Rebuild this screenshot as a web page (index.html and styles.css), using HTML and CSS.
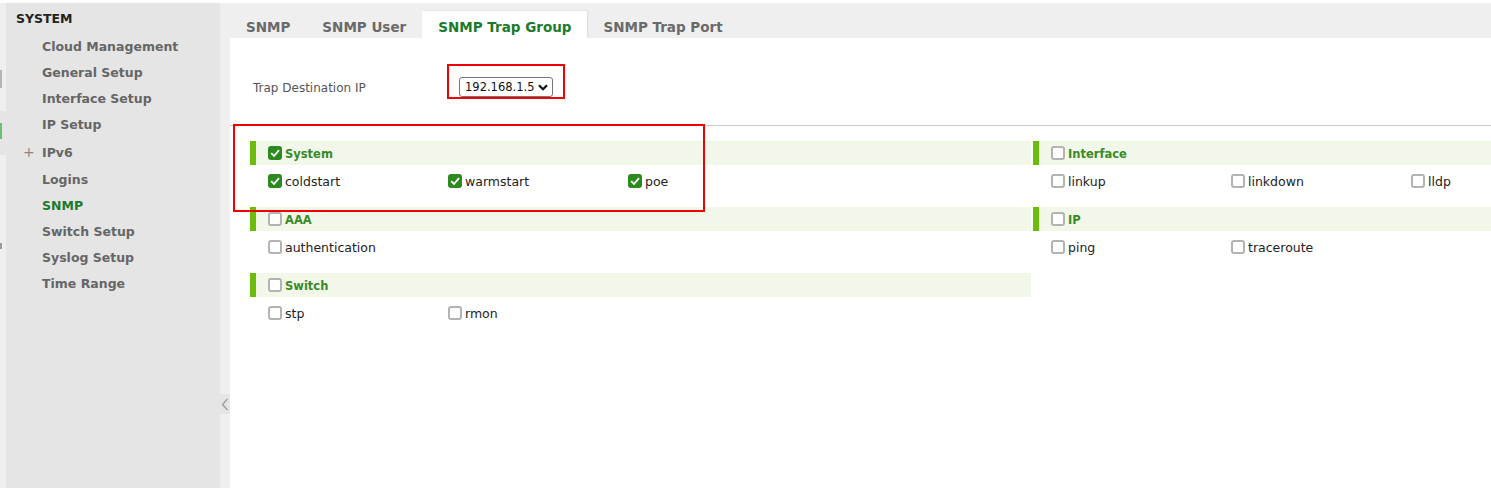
FILE: index.html
```html
<!DOCTYPE html>
<html>
    <head>
        <link rel="stylesheet" href="styles.css">
    </head>
    <body>
        <div class="layout">
            <div class="rail">
                <span class="rail-mark"></span>
                <div class="rail-active"><span class="rail-mark green"></span></div>
                <span class="rail-mark small"></span>
            </div>

            <nav class="sidebar">
                <div class="side-title">SYSTEM</div>
                <ul class="side-menu">
                    <li>Cloud Management</li>
                    <li>General Setup</li>
                    <li>Interface Setup</li>
                    <li>IP Setup</li>
                    <li class="has-sub"><span class="plus">+</span>IPv6</li>
                    <li>Logins</li>
                    <li class="active">SNMP</li>
                    <li>Switch Setup</li>
                    <li>Syslog Setup</li>
                    <li>Time Range</li>
                </ul>
            </nav>

            <div class="gutter">
                <div class="collapse">
                    <svg width="8" height="13" viewBox="0 0 8 13"><polyline points="6.5,1 1.5,6.5 6.5,12" fill="none" stroke="#9a9a9a" stroke-width="1.3"/></svg>
                </div>
            </div>

            <main class="main">
                <div class="tabs">
                    <div class="tab">SNMP</div>
                    <div class="tab">SNMP User</div>
                    <div class="tab active">SNMP Trap Group</div>
                    <div class="tab">SNMP Trap Port</div>
                </div>

                <div class="panel">
                    <div class="field-row">
                        <label class="field-label">Trap Destination IP</label>
                        <div class="select">
                            <span>192.168.1.5</span>
                            <svg width="10" height="7" viewBox="0 0 10 7"><polyline points="1,1.2 5,5.2 9,1.2" fill="none" stroke="#111" stroke-width="2.2"/></svg>
                        </div>
                    </div>

                    <hr class="divider">

                    <div class="groups">
                        <div class="col">
                            <div class="grp">
                                <div class="grp-head"><span class="cb on"><svg viewBox="0 0 14 14"><polyline points="3.2,7.2 6,10 11,4.2" fill="none" stroke="#fff" stroke-width="1.8"/></svg></span>System</div>
                                <div class="grp-items">
                                    <div class="item"><span class="cb on"><svg viewBox="0 0 14 14"><polyline points="3.2,7.2 6,10 11,4.2" fill="none" stroke="#fff" stroke-width="1.8"/></svg></span>coldstart</div>
                                    <div class="item"><span class="cb on"><svg viewBox="0 0 14 14"><polyline points="3.2,7.2 6,10 11,4.2" fill="none" stroke="#fff" stroke-width="1.8"/></svg></span>warmstart</div>
                                    <div class="item"><span class="cb on"><svg viewBox="0 0 14 14"><polyline points="3.2,7.2 6,10 11,4.2" fill="none" stroke="#fff" stroke-width="1.8"/></svg></span>poe</div>
                                </div>
                            </div>
                            <div class="grp">
                                <div class="grp-head"><span class="cb"></span>AAA</div>
                                <div class="grp-items">
                                    <div class="item"><span class="cb"></span>authentication</div>
                                </div>
                            </div>
                            <div class="grp">
                                <div class="grp-head"><span class="cb"></span>Switch</div>
                                <div class="grp-items">
                                    <div class="item"><span class="cb"></span>stp</div>
                                    <div class="item"><span class="cb"></span>rmon</div>
                                </div>
                            </div>
                        </div>

                        <div class="col">
                            <div class="grp">
                                <div class="grp-head"><span class="cb"></span>Interface</div>
                                <div class="grp-items">
                                    <div class="item"><span class="cb"></span>linkup</div>
                                    <div class="item"><span class="cb"></span>linkdown</div>
                                    <div class="item"><span class="cb"></span>lldp</div>
                                </div>
                            </div>
                            <div class="grp">
                                <div class="grp-head"><span class="cb"></span>IP</div>
                                <div class="grp-items">
                                    <div class="item"><span class="cb"></span>ping</div>
                                    <div class="item"><span class="cb"></span>traceroute</div>
                                </div>
                            </div>
                        </div>
                    </div>

                    <div class="mark mark-ip"></div>
                    <div class="mark mark-system"></div>
                </div>
            </main>
        </div>
    </body>
</html>
```

FILE: styles.css
```css
*{
    box-sizing: border-box;
}

body{
    margin: 0;
    padding-top: 3px;
    background-color: #fff;
    font-family: "DejaVu Sans", sans-serif;
    overflow: hidden;
}

.layout{
    display: flex;
    height: 485px;
}

/* left icon rail, mostly cut off */
.rail{
    flex: 0 0 6px;
    background-color: #efefef;
    display: flex;
    flex-direction: column;
}

.rail-mark{
    display: block;
    width: 2px;
    height: 18px;
    margin-top: 67px;
    background-color: #b5b5b5;
}

.rail-active{
    margin-top: 23px;
    height: 44px;
    background-color: #e5e5e5;
}

.rail-mark.green{
    height: 16px;
    margin-top: 12px;
    background-color: #6cc070;
}

.rail-mark.small{
    height: 6px;
    margin-top: 88px;
    background-color: #9a9a9a;
}

.sidebar{
    flex: 0 0 214px;
    background-color: #e5e5e5;
    white-space: nowrap;
}

.side-title{
    padding: 3px 0 0 10px;
    line-height: 26px;
    font-size: 12.5px;
    font-weight: bold;
    color: #222;
}

.side-menu{
    list-style: none;
    margin: 2px 0 0;
    padding: 0;
}

.side-menu li{
    position: relative;
    height: 26px;
    line-height: 26px;
    padding-left: 36px;
    font-size: 12.5px;
    font-weight: bold;
    color: #666;
}

.side-menu li.has-sub{
    height: 29px;
    line-height: 29px;
}

.side-menu li.active{
    color: #1b7a2c;
}

.plus{
    position: absolute;
    left: 17px;
    font-weight: normal;
    font-size: 14px;
    color: #888;
}

.gutter{
    flex: 0 0 10px;
    background-color: #efefef;
}

.collapse{
    margin-top: 391px;
    height: 20px;
    background-color: #e5e5e5;
    display: flex;
    align-items: center;
    justify-content: center;
}

.main{
    flex: 1;
    min-width: 0;
    display: flex;
    flex-direction: column;
    background-color: #efefef;
}

.tabs{
    display: flex;
    height: 35px;
    padding-top: 8px;
    white-space: nowrap;
}

.tab{
    height: 27px;
    padding: 4px 16px 0;
    line-height: 24px;
    font-size: 13.5px;
    font-weight: bold;
    color: #6a6a6a;
}

.tab.active{
    background-color: #fff;
    color: #1b7a2c;
    box-shadow: 1px 0 2px rgba(0, 0, 0, 0.08);
}

.panel{
    position: relative;
    flex: 1;
    background-color: #fff;
}

.field-row{
    display: flex;
    align-items: center;
    height: 34px;
    margin-top: 32px;
    padding-left: 23px;
}

.field-label{
    width: 206px;
    padding-top: 1px;
    font-size: 12px;
    color: #555;
}

.select{
    width: 94px;
    height: 20px;
    padding: 0 4px 0 5px;
    border: 1px solid #767676;
    border-radius: 3px;
    display: flex;
    align-items: center;
    justify-content: space-between;
    font-size: 11.5px;
    color: #111;
}

.divider{
    margin: 21px 0 0;
    border: 0;
    border-top: 1px solid #c8c8c8;
}

.groups{
    display: grid;
    grid-template-columns: 781px minmax(0, 1fr);
    column-gap: 2px;
    padding: 15px 0 0 20px;
}

.grp{
    margin-bottom: 10px;
}

.grp-head{
    height: 24px;
    padding: 1px 0 0 12px;
    border-left: 6px solid #6bbd0c;
    background-color: #f1f7e9;
    display: flex;
    align-items: center;
    gap: 3px;
    font-size: 11.5px;
    font-weight: bold;
    color: #3a8a25;
}

.grp-head .cb{
    margin-top: -1px;
}

.grp-items{
    display: grid;
    grid-template-columns: 180px 180px auto;
    height: 32px;
    align-items: center;
    padding-left: 18px;
}

.item{
    display: flex;
    align-items: center;
    gap: 3px;
    font-size: 12.5px;
    color: #222;
    white-space: nowrap;
}

.cb{
    display: inline-flex;
    flex: 0 0 14px;
    width: 14px;
    height: 14px;
    border: 2px solid #b3b3b3;
    border-radius: 3px;
    background-color: #fff;
}

.cb.on{
    border: 0;
    background-color: #2c8a1e;
}

.cb svg{
    width: 14px;
    height: 14px;
}

/* red annotation boxes drawn over the form */
.mark{
    position: absolute;
    border: 2px solid #f00000;
}

.mark-ip{
    left: 217px;
    top: 26px;
    width: 118px;
    height: 35px;
}

.mark-system{
    left: 3px;
    top: 86px;
    width: 472px;
    height: 88px;
}
```
